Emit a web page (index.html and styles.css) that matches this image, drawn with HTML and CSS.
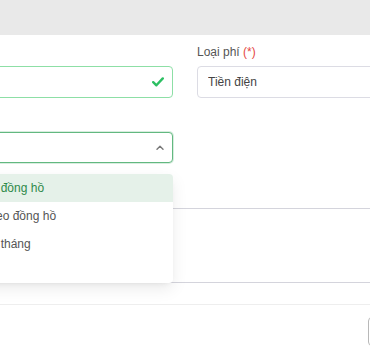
FILE: index.html
```html
<!DOCTYPE html>
<html lang="vi">
<head>
    <meta charset="UTF-8">
    <meta name="viewport" content="width=device-width, initial-scale=1.0">
    <title>Thêm khoản phí</title>
    <link rel="stylesheet" href="styles.css">
</head>
<body>
    <div class="modal-head"></div>
    <div class="modal">
        <div class="modal-body">
            <div class="form-grid">
                <div class="field">
                    <label></label>
                    <div class="control valid">
                        <input type="text" value="">
                        <svg class="icon-check" width="12" height="10" viewBox="0 0 12 10">
                            <path d="M1.2 5.2 L4.4 8.3 L10.8 1.4" fill="none" stroke="#2cbf62" stroke-width="2.4" stroke-linecap="round" stroke-linejoin="round"/>
                        </svg>
                    </div>
                </div>
                <div class="field">
                    <label>Loại phí <span class="req">(*)</span></label>
                    <div class="control">
                        <input type="text" value="Tiền điện">
                    </div>
                </div>
                <div class="field">
                    <label></label>
                    <div class="select-wrap">
                        <div class="control select open">
                            <span class="select-value"></span>
                            <svg width="8" height="5" viewBox="0 0 8 5">
                                <path d="M1 4.2 L4 1.2 L7 4.2" fill="none" stroke="#777" stroke-width="1.4" stroke-linecap="round" stroke-linejoin="round"/>
                            </svg>
                        </div>
                        <ul class="dropdown">
                            <li class="option active">Có đồng hồ</li>
                            <li class="option">Theo đồng hồ</li>
                            <li class="option">Cả tháng</li>
                        </ul>
                    </div>
                </div>
                <div class="field"></div>
                <div class="field full">
                    <label></label>
                    <textarea></textarea>
                </div>
            </div>
        </div>
        <div class="modal-foot">
            <button type="button" class="btn"></button>
            <button type="button" class="btn"></button>
        </div>
    </div>
</body>
</html>
```

FILE: styles.css
```css
body {
    margin: 0;
    width: 370px;
    height: 360px;
    overflow: hidden;
    background: #fff;
    font-family: 'Liberation Sans', Arial, sans-serif;
    font-size: 12px;
    color: #444;
}

.modal-head {
    height: 35px;
    background: #e9e9e9;
}

.modal {
    width: 702px;
    margin-left: -166px;
}

.modal-body {
    padding: 9px 16px 21px;
}

.form-grid {
    display: grid;
    grid-template-columns: 1fr 1fr;
    column-gap: 24px;
    row-gap: 12px;
}

.field label {
    display: block;
    height: 16px;
    line-height: 16px;
    margin-bottom: 6px;
    color: #555;
}

.req {
    color: #e5483f;
}

.control {
    display: flex;
    align-items: center;
    height: 32px;
    box-sizing: border-box;
    border: 1px solid #dcdce4;
    border-radius: 4px;
    padding: 0 8px 0 10px;
    background: #fff;
}

.control input {
    flex: 1;
    min-width: 0;
    border: none;
    outline: none;
    padding: 0;
    font-family: inherit;
    font-size: 12px;
    color: #444;
    background: transparent;
}

.control.valid {
    border-color: #8ddfa6;
}

.select-wrap {
    position: relative;
}

.control.select {
    height: 31px;
    justify-content: space-between;
}

.control.select.open {
    border-color: #62b880;
    box-shadow: 0 0 0 1px rgba(98, 184, 128, 0.25);
}

.dropdown {
    position: absolute;
    top: calc(100% + 11px);
    left: 0;
    right: 0;
    z-index: 10;
    margin: 0;
    padding: 0 0 25px;
    list-style: none;
    background: #fff;
    border-radius: 4px;
    box-shadow: 0 6px 16px rgba(0, 0, 0, 0.08), 0 3px 6px -4px rgba(0, 0, 0, 0.12);
}

.option {
    height: 28px;
    line-height: 28px;
    padding-left: 132px;
    color: #555;
    white-space: nowrap;
}

.option.active {
    background: #e5f1e9;
    color: #2f8a4a;
    border-radius: 4px 4px 0 0;
}

.field.full {
    grid-column: 1 / -1;
    margin-top: 11px;
}

textarea {
    display: block;
    width: 100%;
    height: 75px;
    box-sizing: border-box;
    border: 1px solid #d4d4dc;
    border-radius: 4px;
    resize: none;
    font-family: inherit;
}

.modal-foot {
    display: flex;
    justify-content: flex-end;
    gap: 8px;
    padding: 12px 16px;
    border-top: 1px solid #eeeeee;
}

.btn {
    width: 72px;
    height: 29px;
    border: 1px solid #b8b8b8;
    border-radius: 4px;
    background: #fff;
    font-family: inherit;
    font-size: 12px;
    color: #444;
}
```
